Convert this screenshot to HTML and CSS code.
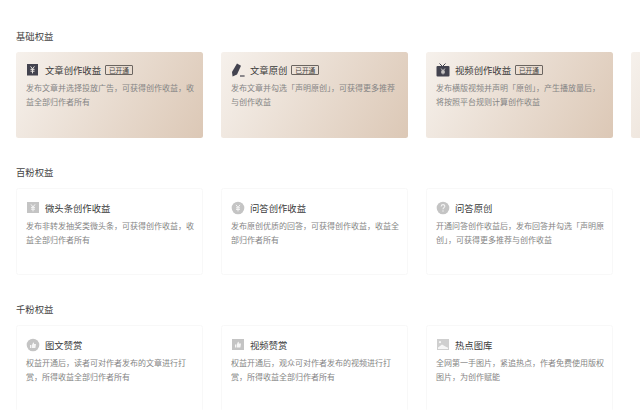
FILE: index.html
```html
<!DOCTYPE html>
<html lang="zh">
<head>
<meta charset="utf-8">
<title>权益</title>
<link rel="stylesheet" href="styles.css">
</head>
<body>
<main class="page">
<section class="group">
<h2 class="group-title">基础权益</h2>
<div class="cards">
<article class="card card-on">
<div class="card-head">
<svg class="icon" viewBox="0 0 14 14"><rect x="1" y="1" width="11" height="11.5" fill="#43434f"/><path d="M4.6 3.4 6.5 6 8.4 3.4M4.5 6.4H8.5M4.5 8.2H8.5M6.5 6V10.4" fill="none" stroke="#e8e4e0" stroke-width="1"/></svg>
<h3 class="card-title">文章创作收益</h3><span class="badge">已开通</span>
</div>
<p class="card-text">发布文章并选择投放广告，可获得创作收益，收益全部归作者所有</p>
</article>
<article class="card card-on">
<div class="card-head">
<svg class="icon" viewBox="0 0 14 14"><path d="M6 0.6 10 2.8 6 11.6 1.6 13.4 1 9Z" fill="#43434f"/><path d="M9 13H13.6" stroke="#43434f" stroke-width="1.2"/></svg>
<h3 class="card-title">文章原创</h3><span class="badge">已开通</span>
</div>
<p class="card-text">发布文章并勾选「声明原创」，可获得更多推荐与创作收益</p>
</article>
<article class="card card-on">
<div class="card-head">
<svg class="icon" viewBox="0 0 14 14"><path d="M3.5 0.5 6.5 3.5 9.5 0.5" fill="none" stroke="#43434f"/><rect x="0.5" y="3" width="13" height="10.5" rx="1" fill="#43434f"/><path d="M5.2 5.6 7 7.8 8.8 5.6M5 8.2H9M5 9.8H9M7 7.8V11.4" fill="none" stroke="#e8e4e0" stroke-width=".9"/></svg>
<h3 class="card-title">视频创作收益</h3><span class="badge">已开通</span>
</div>
<p class="card-text">发布横版视频并声明「原创」，产生播放量后，将按照平台规则计算创作收益</p>
</article>
<article class="card card-on"></article>
</div>
</section>
<section class="group group-tall">
<h2 class="group-title">百粉权益</h2>
<div class="cards">
<article class="card">
<div class="card-head">
<svg class="icon" viewBox="0 0 14 14"><rect x="1" y="1" width="12" height="11" fill="#c4c4c4"/><path d="M5 3.4 7 6 9 3.4M5 6.4H9M5 8.2H9M7 6V10.4" fill="none" stroke="#f4f4f4" stroke-width="1"/></svg>
<h3 class="card-title">微头条创作收益</h3>
</div>
<p class="card-text">发布非转发抽奖类微头条，可获得创作收益，收益全部归作者所有</p>
</article>
<article class="card">
<div class="card-head">
<svg class="icon" viewBox="0 0 14 14"><circle cx="7" cy="7" r="6.3" fill="#c4c4c4"/><path d="M5 3.8 7 6.4 9 3.8M5 6.8H9M5 8.4H9M7 6.4V10.4" fill="none" stroke="#f4f4f4" stroke-width="1"/></svg>
<h3 class="card-title">问答创作收益</h3>
</div>
<p class="card-text">发布原创优质的回答，可获得创作收益，收益全部归作者所有</p>
</article>
<article class="card">
<div class="card-head">
<svg class="icon" viewBox="0 0 14 14"><circle cx="7" cy="7" r="6.3" fill="#c4c4c4"/><path d="M5.2 5.4C5.3 3 8.8 3 8.8 5.3 8.8 6.6 7 6.6 7 8.2" fill="none" stroke="#f4f4f4" stroke-width="1.1"/><circle cx="7" cy="10" r=".7" fill="#f4f4f4"/></svg>
<h3 class="card-title">问答原创</h3>
</div>
<p class="card-text">开通问答创作收益后，发布回答并勾选「声明原创」，可获得更多推荐与创作收益</p>
</article>
</div>
</section>
<section class="group">
<h2 class="group-title">千粉权益</h2>
<div class="cards">
<article class="card">
<div class="card-head">
<svg class="icon" viewBox="0 0 14 14"><circle cx="7" cy="7" r="6.3" fill="#c4c4c4"/><path d="M4 7H5.4V10H4ZM6 7 7.2 4.4C8 4.4 8.2 5 8 6H10L9.4 10H6Z" fill="#f6f6f6"/></svg>
<h3 class="card-title">图文赞赏</h3>
</div>
<p class="card-text">权益开通后，读者可对作者发布的文章进行打赏，所得收益全部归作者所有</p>
</article>
<article class="card">
<div class="card-head">
<svg class="icon" viewBox="0 0 14 14"><rect x="1" y="1" width="12" height="11" fill="#c4c4c4"/><path d="M4 6.4H5.2V9.4H4ZM5.8 6.4 7 3.8C7.8 3.8 8 4.4 7.8 5.4H10L9.4 9.4H5.8Z" fill="#f6f6f6"/></svg>
<h3 class="card-title">视频赞赏</h3>
</div>
<p class="card-text">权益开通后，观众可对作者发布的视频进行打赏，所得收益全部归作者所有</p>
</article>
<article class="card">
<div class="card-head">
<svg class="icon" viewBox="0 0 14 14"><rect x="1" y="1" width="12" height="11" fill="#cfcfcf"/><circle cx="4" cy="4.2" r="1.1" fill="#f6f6f6"/><path d="M2 9.6 6 6.6 9.4 8.6 12 9.8 12 11H2Z" fill="#f6f6f6"/></svg>
<h3 class="card-title">热点图库</h3>
</div>
<p class="card-text">全网第一手图片，紧追热点，作者免费使用版权图片，为创作赋能</p>
</article>
</div>
</section>
</main>
</body>
</html>
```
FILE: styles.css
```css
* { box-sizing: border-box; }
html, body {
  margin: 0;
  height: 410px;
  overflow: hidden;
  background: #fff;
}
body {
  font-family: "Noto Sans CJK SC", "Liberation Sans", sans-serif;
  color: #222;
}
.page {
  width: 640px;
  height: 410px;
  overflow: hidden;
  padding: 29px 0 0 16px;
}
.group { height: 136px; }
.group-tall { height: 137px; }
.group-title {
  margin: 0 0 8px;
  font-size: 9.33px;
  line-height: 15px;
  font-weight: 400;
  color: #444;
}
.cards {
  display: grid;
  grid-template-columns: repeat(4, 187px);
  gap: 18px;
}
.card {
  height: 87px;
  padding: 13px 7px 0 9px;
  border-radius: 2.5px;
  border: 1px solid #f8f8f8;
  background: #fff;
}
.card-on {
  border: 0;
  height: 86px;
  padding: 12px 8px 0 10px;
  background: linear-gradient(120deg, #f6f1ec 0%, #dcc8b6 100%);
}
.card-head {
  display: flex;
  align-items: center;
  height: 12px;
}
.icon {
  width: 14px;
  height: 14px;
  flex: none;
  margin-right: 5px;
}
.card-title {
  margin: 0;
  font-size: 9.33px;
  font-weight: 400;
  line-height: 12px;
  color: #3a3a3a;
}
.badge {
  margin-left: 4px;
  padding: 0 3px;
  font-size: 6.67px;
  line-height: 8px;
  color: #444;
  border: 1px solid #6b6560;
  border-radius: 1px;
}
.card-text {
  margin: 4.5px 0 0;
  font-size: 8px;
  line-height: 14.5px;
  color: #858585;
}
```
